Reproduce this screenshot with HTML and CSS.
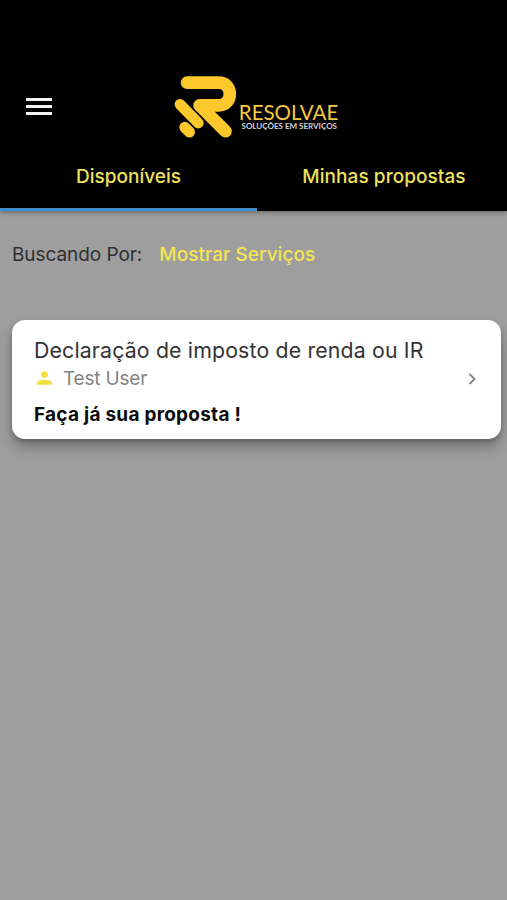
FILE: index.html
```html
<!DOCTYPE html>
<html lang="pt-BR">
<head>
<meta charset="utf-8">
<meta name="viewport" content="width=device-width, initial-scale=1">
<title>Resolvae</title>
<link rel="stylesheet" href="styles.css">
</head>
<body>
<header class="header">
  <div class="toolbar">
    <button class="menu" aria-label="Menu"><span class="bar"></span><span class="bar"></span><span class="bar"></span></button>
    <svg class="logo" width="170" height="70" viewBox="170 70 170 70" role="img" aria-label="Resolvae">
      <g class="logo-mark">
        <path stroke-width="12.6" d="M187 82.6H218.5C225.5 82.6 229.8 87.3 229.8 94S225.5 105.4 218.5 105.4H199.5L225.5 131.2"/>
        <path class="logo-gap" stroke-width="13.4" d="M180 104.4L198.3 123"/>
        <path stroke-width="10.8" d="M180 104.4L198.3 123"/>
        <path stroke-width="11" d="M184.8 127.3L189.5 132"/>
      </g>
      <text class="logo-name" x="238.8" y="119.8" textLength="99.5" lengthAdjust="spacingAndGlyphs">RESOLVAE</text>
      <text class="logo-sub" x="241.5" y="128.8" textLength="95.5" lengthAdjust="spacingAndGlyphs">SOLUÇÕES EM SERVIÇOS</text>
    </svg>
  </div>
  <nav class="tabs">
    <a class="tab active"><span>Disponíveis</span></a>
    <a class="tab"><span>Minhas propostas</span></a>
  </nav>
</header>
<main class="content">
  <div class="filter"><span class="filter-label">Buscando Por:</span><span class="filter-value">Mostrar Serviços</span></div>
  <article class="card">
    <div class="details">
      <h2 class="title">Declaração de imposto de renda ou IR</h2>
      <div class="user">
        <svg width="21" height="20" viewBox="0 0 24 24"><path fill="#f4df3c" d="M12 12c2.21 0 4-1.79 4-4s-1.79-4-4-4-4 1.79-4 4 1.79 4 4 4zm0 2c-3 0-9 1.34-9 4v2h18v-2c0-2.66-6-4-9-4z"/></svg>
        <span class="user-name">Test User</span>
      </div>
      <p class="cta">Faça já sua proposta !</p>
    </div>
    <svg class="chevron" width="8" height="12" viewBox="0 0 8 12"><path d="M1.5 1L6.5 6L1.5 11"/></svg>
  </article>
</main>
</body>
</html>
```

FILE: styles.css
```css
* { box-sizing: border-box; }
body {
  margin: 0;
  min-height: 900px;
  background: #9e9e9e;
  font-family: Inter, "Liberation Sans", sans-serif;
}
.header {
  height: 211px;
  padding-top: 70px;
  background: #000;
  box-shadow: 0 1px 5px rgba(0, 0, 0, .4);
}
.toolbar { display: flex; height: 72px; padding-left: 26px; }
.menu {
  display: flex;
  flex-direction: column;
  gap: 4px;
  width: 26px;
  margin: 28px 118px 0 0;
  padding: 0;
  border: 0;
  background: none;
}
.bar { width: 26px; height: 3px; background: #f3f3f3; }
.logo { display: block; }
.logo-mark { fill: none; stroke: #fcc82b; stroke-linecap: round; stroke-linejoin: round; }
.logo-mark .logo-gap { stroke: #000; }
.logo-name { font: 400 21px Lato, sans-serif; fill: #f5c842; }
.logo-sub { font: 700 8px Lato, sans-serif; fill: #d4d4d4; }
.tabs { display: flex; height: 69px; }
.tab {
  flex: 1;
  padding-top: 23px;
  border-bottom: 3px solid transparent;
  color: #efe25c;
  font-size: 19px;
  font-weight: 500;
  line-height: 24px;
  text-align: center;
  white-space: nowrap;
}
.tab.active { flex: 0 0 257px; border-color: #3f8fce; }
.tab:not(.active) { padding-left: 4px; letter-spacing: .06px; }
.content { padding: 32px 6px 0 12px; }
.filter { display: flex; gap: 17px; font-size: 19px; line-height: 24px; }
.filter-label { color: #303030; letter-spacing: -.06px; }
.filter-value { color: #f4e450; font-weight: 500; letter-spacing: .03px; }
.card {
  display: flex;
  justify-content: space-between;
  height: 119px;
  margin-top: 53px;
  padding: 17px 25px 0 22px;
  border-radius: 13px;
  background: #fff;
  box-shadow: 0 8px 14px rgba(0, 0, 0, .26), 0 3px 5px rgba(0, 0, 0, .18);
}
.title { margin: 0; color: #333; font-size: 21.3px; font-weight: 400; line-height: 26px; letter-spacing: .16px; }
.user { display: flex; align-items: center; gap: 8px; height: 30px; color: #848484; font-size: 19px; letter-spacing: -.18px; }
.cta { margin: 10px 0 0; color: #0b0b0b; font-size: 19px; font-weight: 700; line-height: 24px; letter-spacing: .25px; }
.chevron { margin-top: 36px; fill: none; stroke: #858585; stroke-width: 1.8; }
```
